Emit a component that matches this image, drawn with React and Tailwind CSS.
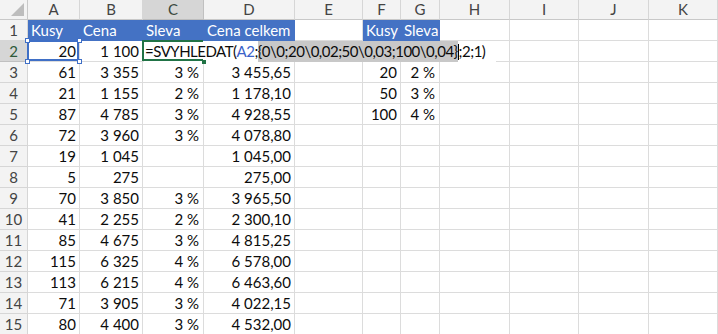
import React from "react";

const COLS = ["A", "B", "C", "D", "E", "F", "G", "H", "I", "J", "K"];

const rows = [
  ["20", "1 100", "", "", "", "", ""],
  ["61", "3 355", "3 %", "3 455,65", "", "20", "2 %"],
  ["21", "1 155", "2 %", "1 178,10", "", "50", "3 %"],
  ["87", "4 785", "3 %", "4 928,55", "", "100", "4 %"],
  ["72", "3 960", "3 %", "4 078,80", "", "", ""],
  ["19", "1 045", "", "1 045,00", "", "", ""],
  ["5", "275", "", "275,00", "", "", ""],
  ["70", "3 850", "3 %", "3 965,50", "", "", ""],
  ["41", "2 255", "2 %", "2 300,10", "", "", ""],
  ["85", "4 675", "3 %", "4 815,25", "", "", ""],
  ["115", "6 325", "4 %", "6 578,00", "", "", ""],
  ["113", "6 215", "4 %", "6 463,60", "", "", ""],
  ["71", "3 905", "3 %", "4 022,15", "", "", ""],
  ["80", "4 400", "3 %", "4 532,00", "", "", ""],
];

const headRow = ["Kusy", "Cena", "Sleva", "Cena celkem", "", "Kusy", "Sleva"];
const blueCols = [0, 1, 2, 3, 5, 6];

function Handle({ className }) {
  return (
    <span
      className={
        "absolute w-[5px] h-[5px] bg-white border border-[#3f6fc6] z-30 " +
        className
      }
    />
  );
}

export default function App() {
  const cells = [];

  cells.push(
    <div
      key="corner"
      className="relative flex items-end justify-end p-[3px] bg-[#f3f3f3] border-r border-b border-[#c8c8c8]"
    >
      <svg width="13" height="13" viewBox="0 0 13 13">
        <polygon points="13,0 13,13 0,13" fill="#bdbdbd" />
      </svg>
    </div>
  );
  COLS.forEach((c) => {
    const sel = c === "C";
    cells.push(
      <div
        key={"h" + c}
        className={
          "flex items-center justify-center border-r border-b text-[15px] " +
          (sel
            ? "bg-[#d6d6d6] text-[#3b4a3f] border-[#c0c0c0] border-b-[#bdbdbd]"
            : "bg-[#f3f3f3] text-[#444444] border-[#d6d6d6] border-b-[#c8c8c8]")
        }
      >
        {c}
      </div>
    );
  });

  for (let r = 1; r <= 15; r++) {
    const sel = r === 2;
    cells.push(
      <div
        key={"r" + r}
        className={
          "flex items-center justify-center border-r border-b text-[15px] " +
          (sel
            ? "bg-[#d6d6d6] text-[#2f5a3a] border-[#c0c0c0]"
            : "bg-[#f3f3f3] text-[#444444] border-[#d6d6d6]")
        }
      >
        {r}
      </div>
    );
    for (let c = 0; c < 11; c++) {
      let content = null;
      let cls =
        "relative flex items-center px-[3px] whitespace-nowrap border-r border-b border-[#dcdcdc] text-[15px] text-[#0c0c0c]";
      if (r === 1) {
        if (blueCols.includes(c)) {
          cls =
            "relative flex items-center px-[3px] whitespace-nowrap border-r border-b border-[#4472c4] bg-[#4472c4] text-white text-[15px]";
        }
        content = headRow[c] || "";
      } else {
        const data = rows[r - 2];
        const t = c < 7 ? data[c] : "";
        if (t) {
          cls += " justify-end";
          if (c === 2 || c === 6) cls += " pr-[4px]";
        }
        content = t;
      }

      let extra = null;
      if (r === 2 && c === 0) {
        extra = (
          <>
            <span className="absolute -left-[1px] -top-[1px] right-0 bottom-0 border-2 border-[#3f6fc6] z-20 pointer-events-none" />
            <Handle className="-left-[3px] -top-[3px]" />
            <Handle className="-right-[3px] -top-[3px]" />
            <Handle className="-left-[3px] -bottom-[3px]" />
            <Handle className="-right-[3px] -bottom-[3px]" />
          </>
        );
      }
      if (r === 2 && c === 2) {
        extra = (
          <>
            <span className="absolute -left-[1px] -top-[1px] bottom-0 right-0 border-l-2 border-t-2 border-b-2 border-[#217346] z-20 pointer-events-none" />
            <span className="absolute left-[1px] top-0 bottom-[-1px] w-[352px] bg-white z-10 flex items-center pl-[1px] text-[15px] tracking-[-0.5px] text-[#0c0c0c] whitespace-nowrap">
              <span>=SVYHLEDAT(</span>
              <span className="text-[#3a62c9]">A2</span>
              <span>;</span>
              <span className="bg-[#c8c8c8] self-stretch flex items-center">
                {"{0\\0;20\\0,02;50\\0,03;100\\0,04}"}
              </span>
              <span className="w-[1px] h-[16px] bg-black" />
              <span>;2;1)</span>
            </span>
            <span className="absolute right-[-3px] bottom-[-3px] w-[4px] h-[4px] bg-[#217346] z-20" />
          </>
        );
      }
      cells.push(
        <div key={r + "-" + c} className={cls}>
          {content}
          {extra}
        </div>
      );
    }
  }

  return (
    <div
      className="w-[718px] h-[334px] overflow-hidden bg-white"
      style={{ fontFamily: "Lato, 'Open Sans', sans-serif" }}
    >
      <div className="grid grid-cols-[28px_52px_63px_61px_91px_68px_38px_39px_70px_69px_70px_69px] grid-rows-[20px_repeat(15,21px)]">
        {cells}
      </div>
    </div>
  );
}
